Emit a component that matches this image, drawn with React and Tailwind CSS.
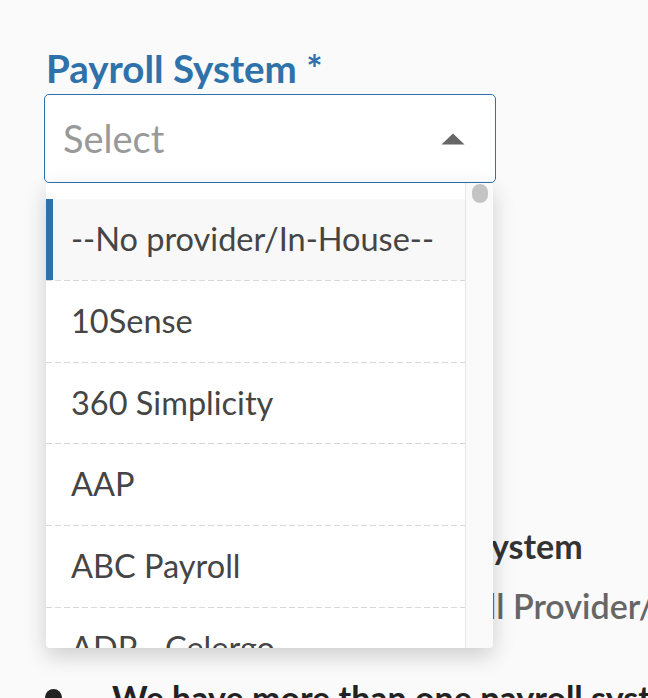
import React from 'react';

const providers = [
    '--No provider/In-House--',
    '10Sense',
    '360 Simplicity',
    'AAP',
    'ABC Payroll',
    'ADP - Celergo',
    'ADP - Comprehensive',
];

function Caret() {
    return (
        <svg width="24" height="12" viewBox="0 0 24 12" className="shrink-0">
            <path d="M12 0.5 L23.5 11.5 L0.5 11.5 Z" fill="#666666" />
        </svg>
    );
}

function ProviderMenu() {
    return (
        <div className="absolute left-[2px] top-full z-10 flex h-[465px] w-[447px] overflow-hidden rounded-b-[4px] bg-white shadow-[0_8px_22px_rgba(0,0,0,0.18)]">
            <div className="flex-1 overflow-hidden pt-[16px]">
                {providers.map((name, index) => (
                    <div key={name}>
                        <div
                            className={
                                index === 0
                                    ? 'flex h-[80.75px] items-center bg-[#f8f8f8] text-[32.5px] text-[#454545]'
                                    : 'flex h-[80.75px] items-center text-[32.5px] text-[#454545]'
                            }
                        >
                            <div className={index === 0 ? 'h-full w-[7px] shrink-0 bg-[#2f72aa]' : 'h-full w-[7px] shrink-0'} />
                            <span className="pl-[18px] whitespace-nowrap">{name}</span>
                        </div>
                        <div className="h-px bg-[repeating-linear-gradient(to_right,#d8d8d8_0,#d8d8d8_6px,transparent_6px,transparent_9px)]" />
                    </div>
                ))}
            </div>
            <div className="w-[28px] shrink-0 border-l border-[#e6e6e6] bg-[#fafafa] px-[6px] pt-[1px]">
                <div className="h-[19px] w-[16px] rounded-full bg-[#c4c4c4]" />
            </div>
        </div>
    );
}

export default function App() {
    return (
        <div className="h-[698px] overflow-hidden bg-[#fafafa] pt-[44px] font-['Lato',sans-serif]">
            <div className="pl-[44px]">
                <label className="block pl-[2px] text-[38.5px] font-bold leading-[48px] text-[#2f72aa]">
                    Payroll System *
                </label>

                <div className="relative mt-[2px] w-[452px]">
                    <div className="flex h-[89px] items-center justify-between rounded-[5px] border-[1.5px] border-[#2f72aa] bg-white pl-[18px] pr-[30px]">
                        <span className="text-[38px] text-[#999999]">Select</span>
                        <Caret />
                    </div>
                    <ProviderMenu />
                </div>
            </div>

            <div className="mt-[342px]">
                <div className="flex whitespace-nowrap text-[34px] font-bold leading-[42px] text-[#333333]">
                    <span className="w-[491px] shrink-0 text-right">Your current Payroll S</span>
                    <span>ystem</span>
                </div>
                <div className="mt-[18px] flex whitespace-nowrap text-[34px] font-semibold leading-[42px] text-[#666666]">
                    <span className="w-[488px] shrink-0 text-right">No Payro</span>
                    <span>ll Provider/In-House</span>
                </div>
                <div className="mt-[50px] flex items-start whitespace-nowrap pl-[45px] text-[34px] font-bold leading-[42px] text-[#222222]">
                    <span className="mt-[12px] h-[17px] w-[17px] shrink-0 rounded-full bg-[#222222]" />
                    <span className="ml-[50px]">We have more than one payroll system</span>
                </div>
            </div>
        </div>
    );
}
